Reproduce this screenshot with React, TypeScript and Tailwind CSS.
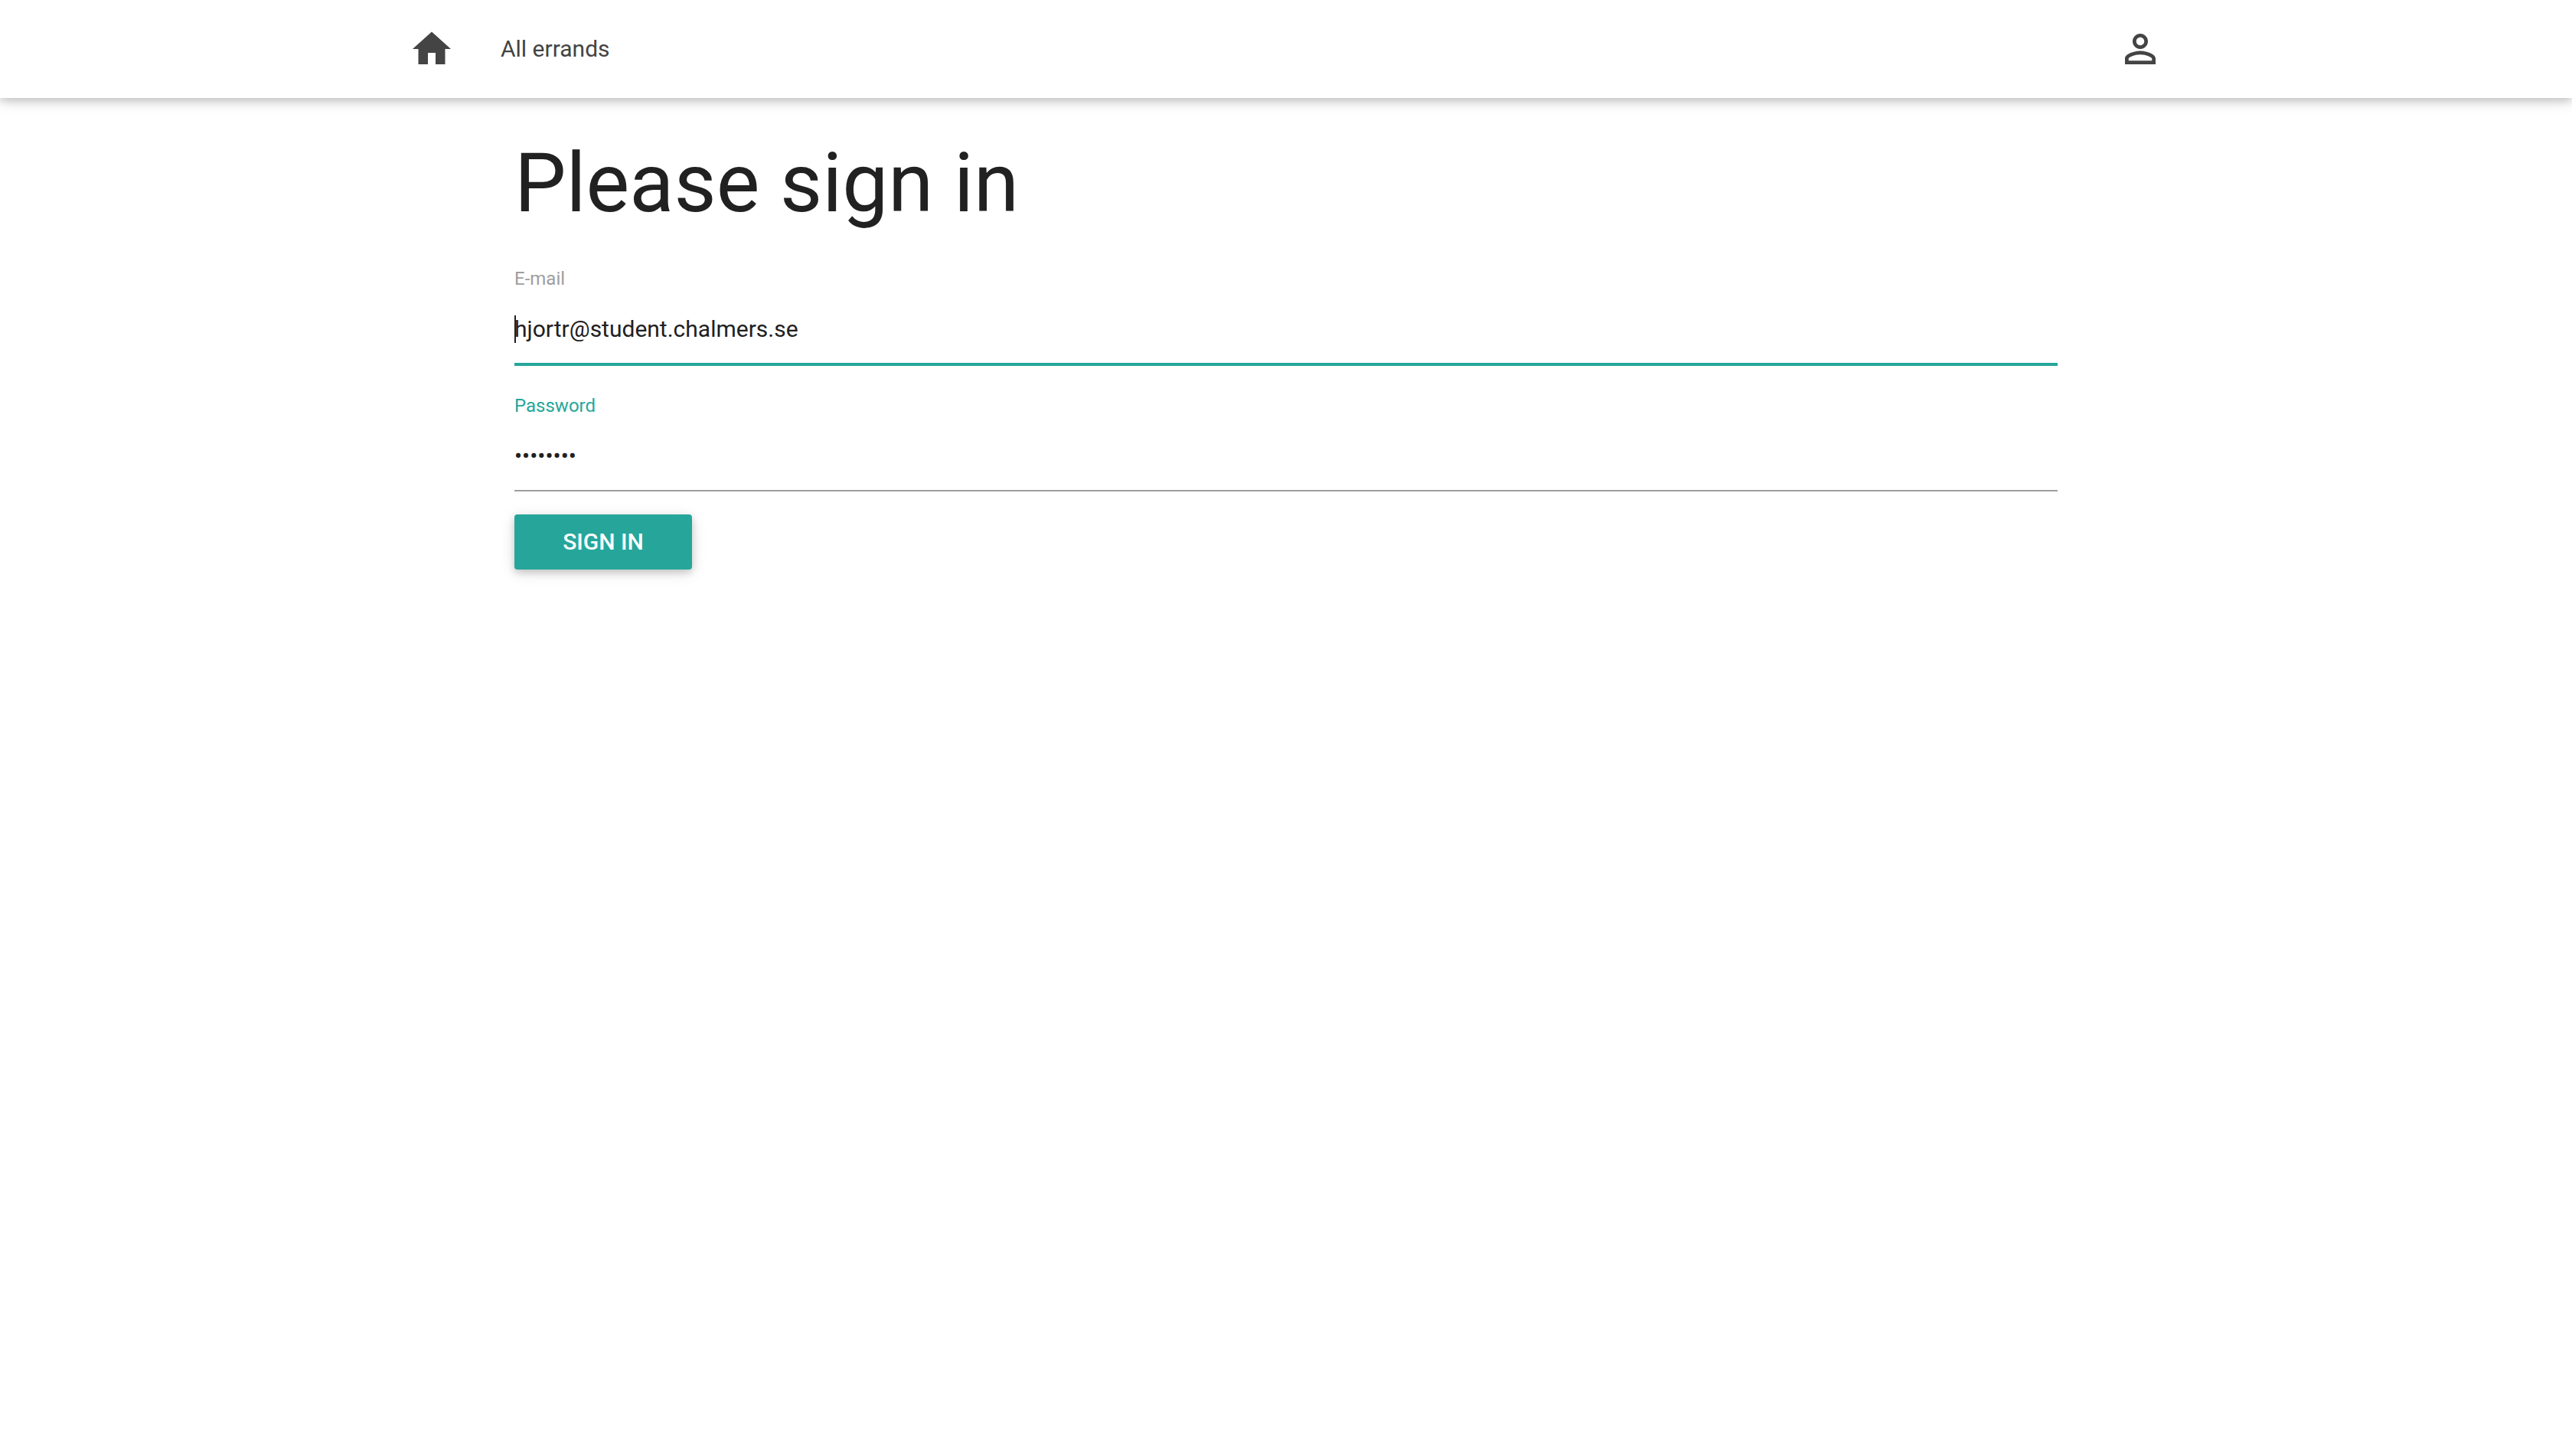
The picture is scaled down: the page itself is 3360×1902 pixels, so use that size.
import React from "react";

const elevation =
  "shadow-[0_4px_10px_0_rgba(0,0,0,0.16),0_4px_20px_0_rgba(0,0,0,0.12)]";

function HomeIcon() {
  return (
    <svg viewBox="0 0 24 24" className="size-[60px]" fill="currentColor" aria-hidden="true">
      <path d="M10 20v-6h4v6h5v-8h3L12 3 2 12h3v8z" />
    </svg>
  );
}

function PersonIcon() {
  return (
    <svg viewBox="0 0 24 24" className="size-[60px]" fill="currentColor" aria-hidden="true">
      <path d="M12 5.9c1.16 0 2.1.94 2.1 2.1s-.94 2.1-2.1 2.1S9.9 9.16 9.9 8s.94-2.1 2.1-2.1m0 9c2.97 0 6.1 1.46 6.1 2.1v1.1H5.9V17c0-.64 3.13-2.1 6.1-2.1M12 4C9.79 4 8 5.79 8 8s1.79 4 4 4 4-1.79 4-4-1.79-4-4-4zm0 9c-2.67 0-8 1.34-8 4v3h16v-3c0-2.66-5.33-4-8-4z" />
    </svg>
  );
}

function NavBar() {
  return (
    <header className={`bg-white text-[#444] ${elevation}`}>
      <nav className="mx-auto flex h-32 w-[70%] items-center justify-between">
        <div className="flex items-center">
          <a href="#home" aria-label="Home" className="px-[30px]">
            <HomeIcon />
          </a>
          <a href="#errands" className="px-[30px] text-[30px] leading-[36px]">
            All errands
          </a>
        </div>
        <a href="#account" aria-label="Account" className="px-[30px]">
          <PersonIcon />
        </a>
      </nav>
    </header>
  );
}

export default function App() {
  return (
    <div className="min-h-screen bg-white font-['Roboto',sans-serif] text-[#212121]">
      <NavBar />
      <main className="mx-auto w-[60%] pt-[53px]">
        <h1 className="text-[107px] leading-[118px]">Please sign in</h1>
        <form className="mt-[47px]" onSubmit={(e) => e.preventDefault()}>
          <div className="flex flex-col gap-0.5">
            <label htmlFor="email" className="text-[24px] leading-[36px] text-[#9e9e9e]">
              E-mail
            </label>
            <div className="relative flex">
              <input
                id="email"
                type="email"
                defaultValue="hjortr@student.chalmers.se"
                className="h-[94px] w-full border-b-4 border-[#26a69a] bg-transparent text-[30px] outline-none"
              />
              <span className="absolute top-7 left-0 h-9 w-0.5 bg-[#212121]" />
            </div>
          </div>
          <div className="mt-[34px] flex flex-col gap-0.5">
            <label htmlFor="password" className="text-[24px] leading-[36px] text-[#26a69a]">
              Password
            </label>
            <input
              id="password"
              type="password"
              defaultValue="password"
              className="h-[92px] w-full border-b-2 border-[#9e9e9e] bg-transparent text-[30px] outline-none"
            />
          </div>
          <button
            type="submit"
            className={`mt-[30px] h-[72px] w-[232px] rounded-[4px] bg-[#26a69a] pb-0.5 text-center text-[30px] font-medium text-white uppercase ${elevation}`}
          >
            Sign in
          </button>
        </form>
      </main>
    </div>
  );
}
